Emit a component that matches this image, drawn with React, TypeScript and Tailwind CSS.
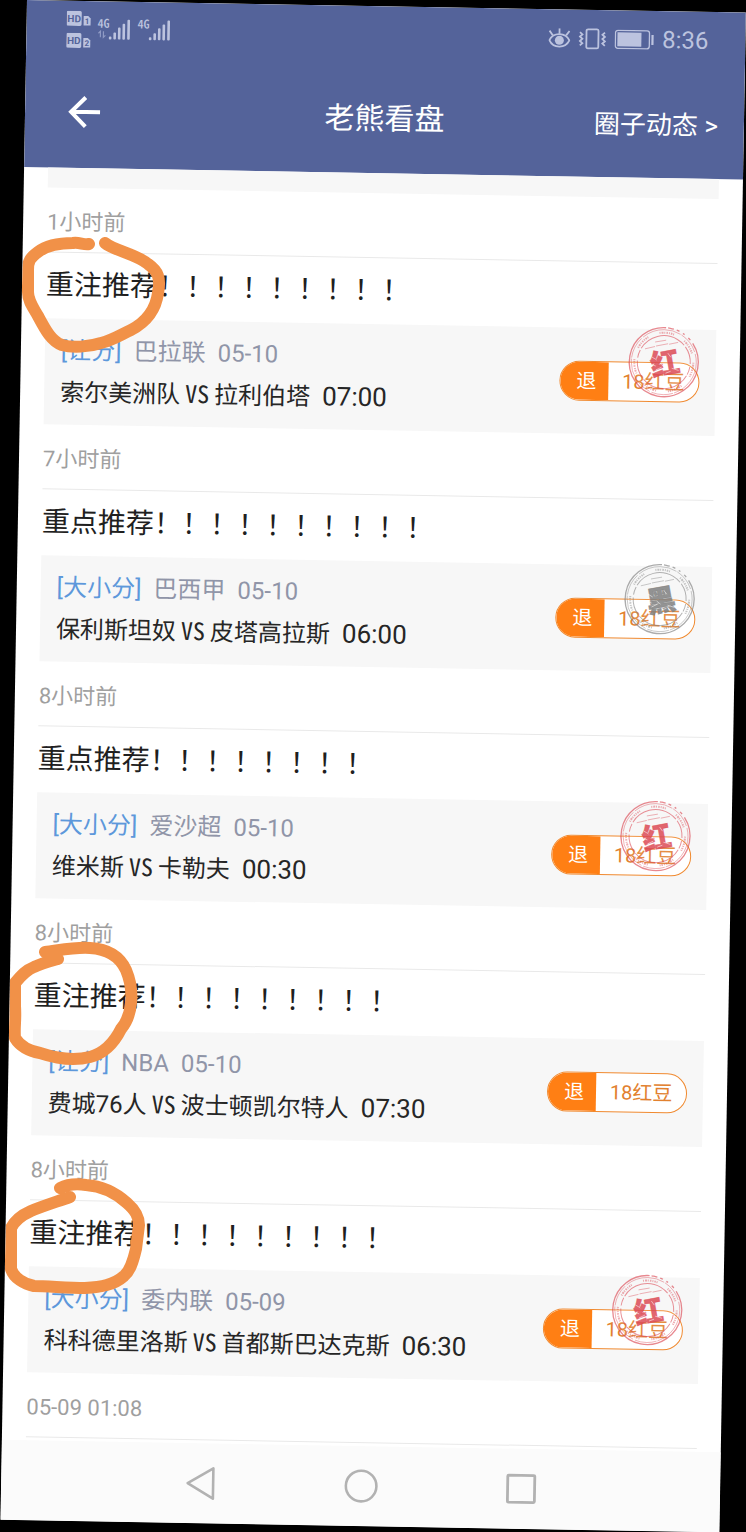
import React from "react";

type Result = "红" | "黑" | null;

interface Post {
  title: string;
  kind: string;
  league: string;
  date: string;
  home: string;
  away: string;
  start: string;
  result: Result;
  posted: string;
}

const posts: Post[] = [
  { title: "重注推荐！！！！！！！！！", kind: "[让分]", league: "巴拉联", date: "05-10", home: "索尔美洲队", away: "拉利伯塔", start: "07:00", result: "红", posted: "7小时前" },
  { title: "重点推荐！！！！！！！！！！", kind: "[大小分]", league: "巴西甲", date: "05-10", home: "保利斯坦奴", away: "皮塔高拉斯", start: "06:00", result: "黑", posted: "8小时前" },
  { title: "重点推荐！！！！！！！！", kind: "[大小分]", league: "爱沙超", date: "05-10", home: "维米斯", away: "卡勒夫", start: "00:30", result: "红", posted: "8小时前" },
  { title: "重注推荐！！！！！！！！！", kind: "[让分]", league: "NBA", date: "05-10", home: "费城76人", away: "波士顿凯尔特人", start: "07:30", result: null, posted: "8小时前" },
  { title: "重注推荐！！！！！！！！！", kind: "[大小分]", league: "委内联", date: "05-09", home: "科科德里洛斯", away: "首都斯巴达克斯", start: "06:30", result: "红", posted: "05-09 01:08" },
];

function HdBadge({ slot }: { slot: string }) {
  return (
    <svg width="25" height="15" viewBox="0 0 25 15" aria-hidden="true">
      <rect x="0" y="0" width="15" height="15" rx="1.5" fill="#bcc3df" />
      <text x="7.5" y="11.3" textAnchor="middle" fontSize="10" fontWeight="700" fill="#54639a">HD</text>
      <path d="M17 5h4.500l2.500 2.500v7h-7z" fill="#bcc3df" />
      <text x="20.5" y="13" textAnchor="middle" fontSize="8" fontWeight="700" fill="#54639a">{slot}</text>
    </svg>
  );
}

function Signal({ data }: { data?: boolean }) {
  return (
    <svg className="overflow-visible" width="36" height="36" viewBox="-1 -7 36 36" aria-hidden="true" fill="#bcc3df">
      <text
        x="0"
        y="9.5"
        fontSize="12"
        fontWeight="500"
        className="font-['Noto_Sans_CJK_SC'] [font-feature-settings:'hwid']"
      >
        4G
      </text>
      {data && (
        <g stroke="#8f9ac4" strokeWidth="1.2" fill="none">
          <path d="M1 15l2-2v6M6 13v6l2-2" />
        </g>
      )}
      <rect x="11.500" y="18" width="2.600" height="3" rx="1" />
      <rect x="16" y="14" width="2.600" height="7" rx="1" />
      <rect x="20.500" y="9" width="2.600" height="12" rx="1" />
      <rect x="25" y="5" width="2.600" height="16" rx="1" />
      <rect x="29.800" y="1" width="2.600" height="20" rx="1" />
    </svg>
  );
}

function StatusBar() {
  return (
    <div className="flex h-[58px] items-center justify-between pl-10 pr-[37px] text-[#bcc3df]">
      <div className="flex items-center gap-[5px]">
        <div className="flex flex-col gap-[7px] pb-[2px]">
          <HdBadge slot="1" />
          <HdBadge slot="2" />
        </div>
        <div className="flex items-center gap-1 pb-[3px]">
          <Signal data />
          <Signal />
        </div>
      </div>
      <div className="flex items-center gap-2">
        <svg width="22" height="20" viewBox="0 0 22 20" fill="none" stroke="#bcc3df" strokeWidth="1.8" aria-hidden="true">
          <path d="M1 12C5 3.800 17 3.800 21 12C17 20.500 5 20.500 1 12Z" />
          <path d="M11 0v5.500M1 2.500l3.300 4.500M21 2.500l-3.300 4.500" />
          <circle cx="11" cy="12" r="4.500" fill="#bcc3df" stroke="none" />
        </svg>
        <svg width="28" height="22" viewBox="0 0 28 22" fill="none" stroke="#bcc3df" strokeWidth="1.8" aria-hidden="true">
          <rect x="8" y="1.500" width="12" height="19" rx="1.500" />
          <path d="M1.500 4.500l2.500 2.200-2.500 2.200 2.500 2.200-2.500 2.200 2.500 2.200-2.500 2.200" />
          <path d="M26.500 4.500l-2.500 2.200 2.500 2.200-2.500 2.200 2.500 2.200-2.500 2.200 2.500 2.200" />
        </svg>
        <svg width="40" height="20" viewBox="0 0 40 20" aria-hidden="true">
          <rect x="1" y="1" width="34" height="18" rx="2.500" fill="none" stroke="#bcc3df" strokeWidth="1.300" />
          <rect x="3" y="3" width="24" height="14" fill="#bcc3df" />
          <rect x="37" y="5" width="2.200" height="10" fill="#bcc3df" />
        </svg>
        <time className="text-2xl">8:36</time>
      </div>
    </div>
  );
}

function TitleBar() {
  return (
    <div className="grid h-[109px] grid-cols-[1fr_auto_1fr] items-center px-[26px] text-white">
      <button type="button" aria-label="返回" className="justify-self-start pb-1 pl-4">
        <svg width="34" height="34" viewBox="0 0 34 34" fill="none" stroke="white" strokeWidth="4" aria-hidden="true">
          <path d="M33 17H4M18.500 2.500L4 17l14.500 14.500" />
        </svg>
      </button>
      <h1 className="text-[30px]">老熊看盘</h1>
      <a href="#circle" className="justify-self-end pt-[3px] text-[26px]">圈子动态 &gt;</a>
    </div>
  );
}

function Stamp({ result }: { result: "红" | "黑" }) {
  const ink = result === "红" ? "#dc4a55" : "#808080";
  return (
    <svg
      className="pointer-events-none absolute left-[68px] top-[-36px] overflow-visible"
      width="72"
      height="72"
      viewBox="-36 -36 72 72"
      role="img"
      aria-label={result}
    >
      <circle r="34" fill="white" fillOpacity="0.1" />
      <g fill="none" stroke={ink}>
        <circle r="34.500" strokeWidth="1.300" strokeOpacity="0.65" strokeDasharray="158 2 6 3 3 4 2 5 3 4 27" transform="rotate(10)" />
        <circle r="32.500" strokeWidth="0.700" strokeOpacity="0.6" strokeDasharray="40 1 22 2" />
        <circle r="29.500" strokeWidth="2" strokeOpacity="0.45" strokeDasharray="1 1 2 0.800 1 1.200 1.500 1 1 1 1.500 0.800 1 12" />
        <circle r="26.500" strokeWidth="1" strokeOpacity="0.6" strokeDasharray="50 2 18 3 8 2" transform="rotate(30)" />
        <path d="M-19 -13L-9 -15.500M-8 -16L4 -18.500M5 -18L14 -20M-9 -20L2 -22" strokeWidth="0.700" strokeOpacity="0.6" />
      </g>
      <text
        x="1"
        y="12"
        textAnchor="middle"
        fontSize="29"
        fontWeight="900"
        fill={ink}
        fillOpacity="0.85"
        stroke={ink}
        strokeOpacity="0.6"
        strokeWidth="0.800"
        transform="rotate(-11)"
      >
        {result}
      </text>
      <g stroke="white" strokeOpacity="0.6" strokeWidth="0.900">
        <path d="M-12 -5l5 3M-8 8l6-3M4 -9l3 4M8 6l7 2M-3 2l4 3M-11 3l3 1M2 11l5-2" />
      </g>
    </svg>
  );
}

function PriceButton({ result }: { result: Result }) {
  return (
    <div className="relative shrink-0">
      <button
        type="button"
        className="flex h-10 w-[140px] overflow-hidden rounded-full border border-[#f08a30] bg-white text-xl"
      >
        <span className="flex h-full w-12 items-center justify-center bg-[#ff7f14] pl-1 text-white">退</span>
        <span className="flex h-full flex-1 items-center justify-center text-[#e2812f]">18红豆</span>
      </button>
      {result && <Stamp result={result} />}
    </div>
  );
}

function PostedAt({ children }: { children: React.ReactNode }) {
  return (
    <div className="flex h-[65px] items-center border-b border-[#e9e9e9] pt-1 text-[22px] text-[#9f9f9f]">
      <time>{children}</time>
    </div>
  );
}

function PostItem({ post }: { post: Post }) {
  return (
    <article>
      <h2 className="flex h-[66px] items-center text-[28px] text-[#1f1f1f]">{post.title}</h2>
      <div className="flex h-[106px] items-center justify-between bg-[#f7f7f7] px-4">
        <div className="text-2xl leading-[39px] whitespace-nowrap">
          <div className="flex gap-3 text-[#9095a8]">
            <span className="text-[#5d98db]">{post.kind}</span>
            <span>{post.league}</span>
            <span>{post.date}</span>
          </div>
          <div className="flex items-baseline text-[#262626]">
            <span>{post.home}</span>
            <span className="mx-[5px] font-['Noto_Sans_CJK_SC'] [font-feature-settings:'hwid']">VS</span>
            <span>{post.away}</span>
            <time className="ml-3 text-[26px]">{post.start}</time>
          </div>
        </div>
        <PriceButton result={post.result} />
      </div>
      <PostedAt>{post.posted}</PostedAt>
    </article>
  );
}

function PenMarks() {
  return (
    <svg className="pointer-events-none absolute inset-0 h-full w-full" aria-hidden="true">
      <g
        transform="rotate(-1) translate(-27 0)"
        fill="none"
        stroke="#f19148"
        strokeWidth="12"
        strokeLinecap="round"
        strokeLinejoin="round"
      >
        <path d="M89 244C84 245 79 242 73 243C60 243 47 245 38 252C30 258 28 261 28 270L28 292C28 301 33 307 38 316C45 329 51 341 62 345C72 348 89 347 101 343C113 340 122 334 131 330C148 321 156 308 158 293C161 278 158 271 148 264C136 254 115 251 105 243" />
        <path d="M45 952C61 950 75 947 90 948C108 949 120 957 126 970C131 982 132 994 131 1003C130 1014 127 1022 121 1029C115 1041 105 1053 90 1057C74 1061 55 1058 40 1053C29 1051 20 1046 15 1038C14 1027 16 1020 15 1006L15 983C21 976 26 970 34 967C43 963 51 961 58 959" />
        <path d="M60 1188C68 1184 79 1184 86 1185C102 1186 117 1194 127 1203C135 1210 139 1216 139 1225C138 1233 137 1241 136 1249C133 1262 130 1271 124 1276C114 1285 101 1287 85 1288C67 1288 48 1286 34 1286C24 1284 14 1278 11 1269L11 1228C15 1220 22 1215 31 1211C43 1206 56 1202 70 1197" />
      </g>
    </svg>
  );
}

function SystemNav() {
  return (
    <nav className="flex h-[80px] items-center justify-center gap-[126px] bg-[#fbfbfb]" aria-label="系统导航">
      <button type="button" aria-label="后退">
        <svg width="34" height="34" viewBox="0 0 34 34" fill="none" stroke="#b2b2b2" strokeWidth="2.600" strokeLinejoin="round" aria-hidden="true">
          <path d="M3.500 17L29 1.800V32.200Z" />
        </svg>
      </button>
      <button type="button" aria-label="主屏幕">
        <svg width="34" height="34" viewBox="0 0 34 34" fill="none" stroke="#b2b2b2" strokeWidth="2.600" aria-hidden="true">
          <circle cx="17" cy="17" r="15.300" />
        </svg>
      </button>
      <button type="button" aria-label="最近任务">
        <svg width="34" height="34" viewBox="0 0 34 34" fill="none" stroke="#b2b2b2" strokeWidth="2.800" aria-hidden="true">
          <rect x="3.500" y="3.500" width="27" height="27" rx="1" />
        </svg>
      </button>
    </nav>
  );
}

export default function App() {
  return (
    <div
      lang="zh-CN"
      className="min-h-screen overflow-hidden bg-black pl-[27px] font-[Roboto,'Noto_Sans_CJK_SC',sans-serif]"
    >
      <div className="relative origin-top-left rotate-1 overflow-hidden bg-white">
        <header className="bg-[#54639a]">
          <StatusBar />
          <TitleBar />
        </header>
        <main className="px-6 pb-[3px]">
          <div className="h-5 bg-[#f7f7f7]" />
          <PostedAt>1小时前</PostedAt>
          {posts.map((post, i) => (
            <PostItem key={i} post={post} />
          ))}
        </main>
        <SystemNav />
        <PenMarks />
      </div>
    </div>
  );
}
